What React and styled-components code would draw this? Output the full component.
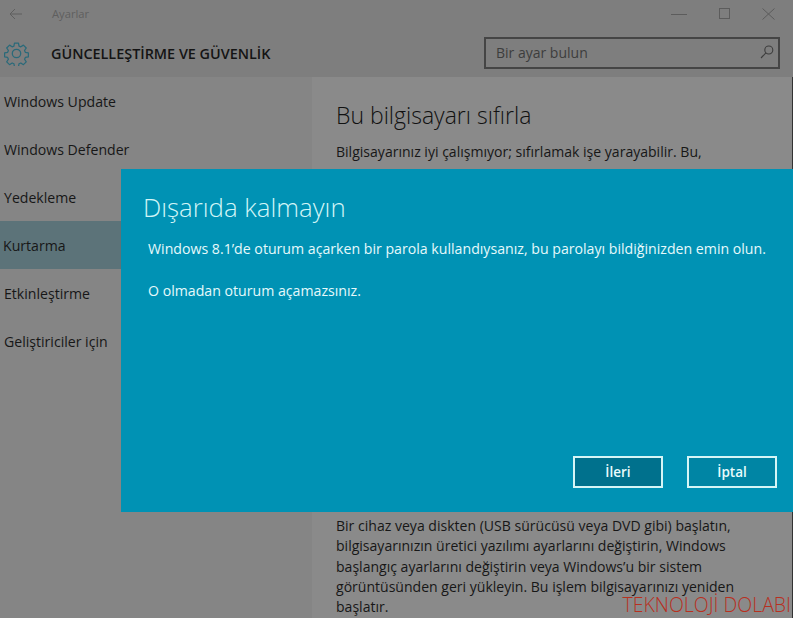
import React from "react";
import styled, { createGlobalStyle } from "styled-components";

const Global = createGlobalStyle`
  html, body {
    margin: 0;
    padding: 0;
    width: 793px;
    height: 618px;
    overflow: hidden;
    background: #858585;
  }
  * { box-sizing: border-box; }
`;

const Page = styled.div`
  position: relative;
  width: 793px;
  height: 618px;
  overflow: hidden;
  display: flex;
  flex-direction: column;
  background: #858585;
  color: #111;
  font-family: "Open Sans", "Noto Sans", sans-serif;
`;

const TitleBar = styled.div`
  height: 27px;
  flex: none;
  display: flex;
  align-items: center;
  background: #7e7e7e;
  padding-left: 9px;
`;

const AppName = styled.span`
  margin-left: 29px;
  font-size: 11.2px;
  color: #5f5f5f;
`;

const WindowButtons = styled.div`
  margin-left: auto;
  display: flex;
  align-items: center;
  gap: 32px;
  padding-right: 18px;
`;

const Header = styled.div`
  height: 50px;
  flex: none;
  display: flex;
  align-items: center;
  background: #7e7e7e;
  padding: 2px 0 0 4px;
`;

const SectionTitle = styled.h1`
  margin: 0 0 0 22px;
  font-size: 14.4px;
  font-weight: 600;
  color: #141414;
  white-space: nowrap;
`;

const SearchBox = styled.div`
  margin-left: auto;
  margin-right: 13px;
  width: 296px;
  height: 32px;
  display: flex;
  align-items: center;
  justify-content: space-between;
  padding: 0 4px 2px 10px;
  border: 2px solid #454545;
  font-size: 14px;
  color: #3d3d3d;
`;

const Columns = styled.div`
  flex: 1;
  display: flex;
  min-height: 0;
`;

const Sidebar = styled.nav`
  width: 312px;
  flex: none;
  display: flex;
  flex-direction: column;
  background: #858585;
`;

const NavItem = styled.div`
  height: 48px;
  flex: none;
  display: flex;
  align-items: center;
  padding-left: ${(p) => (p.$active ? "3px" : "4px")};
  font-size: 14.1px;
  color: #171717;
  background: ${(p) => (p.$active ? "#5c7379" : "transparent")};
`;

const Content = styled.main`
  flex: 1;
  display: flex;
  flex-direction: column;
  padding: 22px 0 0 24px;
  background: #8a8a8a;
  border-right: 1px solid #333;
`;

const Heading = styled.h2`
  margin: 0;
  font-size: 23px;
  line-height: 32px;
  font-weight: 300;
  color: #111;
`;

const Paragraph = styled.p`
  margin: 11px 0 0;
  width: 450px;
  font-size: 14.05px;
  line-height: 20.2px;
  color: #171717;
`;

const LowerParagraph = styled(Paragraph)`
  margin-top: 354px;
`;

const Dialog = styled.section`
  position: absolute;
  left: 121px;
  top: 169px;
  width: 672px;
  height: 343px;
  display: flex;
  flex-direction: column;
  padding: 19px 22px 24px 22px;
  background: #0092b4;
  color: #e6f9fb;
`;

const DialogTitle = styled.h2`
  margin: 0;
  font-size: 25.8px;
  line-height: 38px;
  font-weight: 300;
  color: #d2f5f7;
`;

const DialogText = styled.p`
  margin: ${(p) => p.$gap} 0 0 5px;
  font-size: 14.15px;
  line-height: 20px;
  white-space: nowrap;
`;

const Actions = styled.div`
  margin-top: auto;
  margin-right: -6px;
  display: flex;
  justify-content: flex-end;
  gap: 24px;
`;

const Button = styled.button`
  width: 90px;
  height: 32px;
  border: 2px solid #d5f5f6;
  background: ${(p) => (p.$primary ? "#00718d" : "#0085a4")};
  color: #e9fbfc;
  font-family: inherit;
  font-size: 13.5px;
  font-weight: 600;
  padding: 0;
`;

const Watermark = styled.div`
  position: absolute;
  right: 2px;
  bottom: 5px;
  font-size: 19.5px;
  font-weight: 300;
  line-height: 16px;
  color: #b8301f;
  white-space: nowrap;
`;

const BackIcon = () => (
  <svg width="14" height="12" viewBox="0 0 14 12" fill="none" stroke="#5f5f5f" strokeWidth="1">
    <path d="M13 6H1M6 1 1 6l5 5" />
  </svg>
);

const MinimizeIcon = () => (
  <svg width="16" height="12" viewBox="0 0 16 12" fill="none" stroke="#5c5c5c" strokeWidth="1">
    <path d="M0 6.5h16" />
  </svg>
);

const MaximizeIcon = () => (
  <svg width="11" height="11" viewBox="0 0 11 11" fill="none" stroke="#5c5c5c" strokeWidth="1">
    <rect x="0.5" y="0.5" width="10" height="10" />
  </svg>
);

const CloseIcon = () => (
  <svg width="13" height="12" viewBox="0 0 13 12" fill="none" stroke="#5c5c5c" strokeWidth="1">
    <path d="M.5.5l12 11M12.5.5l-12 11" />
  </svg>
);

const GearIcon = () => (
  <svg width="25" height="25" viewBox="0 0 25 25" fill="none" stroke="#2a6a7a" strokeWidth="1.3" strokeLinejoin="round">
    <path d="M10.4 1.5h4.2l.6 3.2 1.9.8 2.7-1.8 3 3-1.8 2.7.8 1.9 3.2.6v4.2l-3.2.6-.8 1.9 1.8 2.7-3 3-2.7-1.8-1.9.8-.6 3.2h-4.2l-.6-3.2-1.9-.8-2.7 1.8-3-3 1.8-2.7-.8-1.9-3.2-.6v-4.2l3.2-.6.8-1.9-1.8-2.7 3-3 2.7 1.8 1.9-.8z" transform="translate(.6 .6) scale(.95)" />
    <circle cx="12.5" cy="12.5" r="4.2" />
  </svg>
);

const SearchIcon = () => (
  <svg width="14" height="14" viewBox="0 0 14 14" fill="none" stroke="#3d3d3d" strokeWidth="1.1">
    <circle cx="8.8" cy="5" r="4" />
    <path d="M5.9 7.9 1 13" />
  </svg>
);

const navItems = ["Windows Update", "Windows Defender", "Yedekleme", "Kurtarma", "Etkinleştirme", "Geliştiriciler için"];

const App = () => (
  <Page>
    <Global />
    <TitleBar>
      <BackIcon />
      <AppName>Ayarlar</AppName>
      <WindowButtons>
        <MinimizeIcon />
        <MaximizeIcon />
        <CloseIcon />
      </WindowButtons>
    </TitleBar>
    <Header>
      <GearIcon />
      <SectionTitle>GÜNCELLEŞTİRME VE GÜVENLİK</SectionTitle>
      <SearchBox>
        Bir ayar bulun
        <SearchIcon />
      </SearchBox>
    </Header>
    <Columns>
      <Sidebar>
        {navItems.map((item) => (
          <NavItem key={item} $active={item === "Kurtarma"}>
            {item}
          </NavItem>
        ))}
      </Sidebar>
      <Content>
        <Heading>Bu bilgisayarı sıfırla</Heading>
        <Paragraph>Bilgisayarınız iyi çalışmıyor; sıfırlamak işe yarayabilir. Bu,</Paragraph>
        <LowerParagraph>
          Bir cihaz veya diskten (USB sürücüsü veya DVD gibi) başlatın,
          <br />
          bilgisayarınızın üretici yazılımı ayarlarını değiştirin, Windows
          <br />
          başlangıç ayarlarını değiştirin veya Windows’u bir sistem
          <br />
          görüntüsünden geri yükleyin. Bu işlem bilgisayarınızı yeniden
          <br />
          başlatır.
        </LowerParagraph>
      </Content>
    </Columns>
    <Dialog>
      <DialogTitle>Dışarıda kalmayın</DialogTitle>
      <DialogText $gap="13px">
        Windows 8.1’de oturum açarken bir parola kullandıysanız, bu parolayı bildiğinizden emin olun.
      </DialogText>
      <DialogText $gap="22px">O olmadan oturum açamazsınız.</DialogText>
      <Actions>
        <Button $primary>İleri</Button>
        <Button>İptal</Button>
      </Actions>
    </Dialog>
    <Watermark>TEKNOLOJİ DOLABI</Watermark>
  </Page>
);

export default App;
